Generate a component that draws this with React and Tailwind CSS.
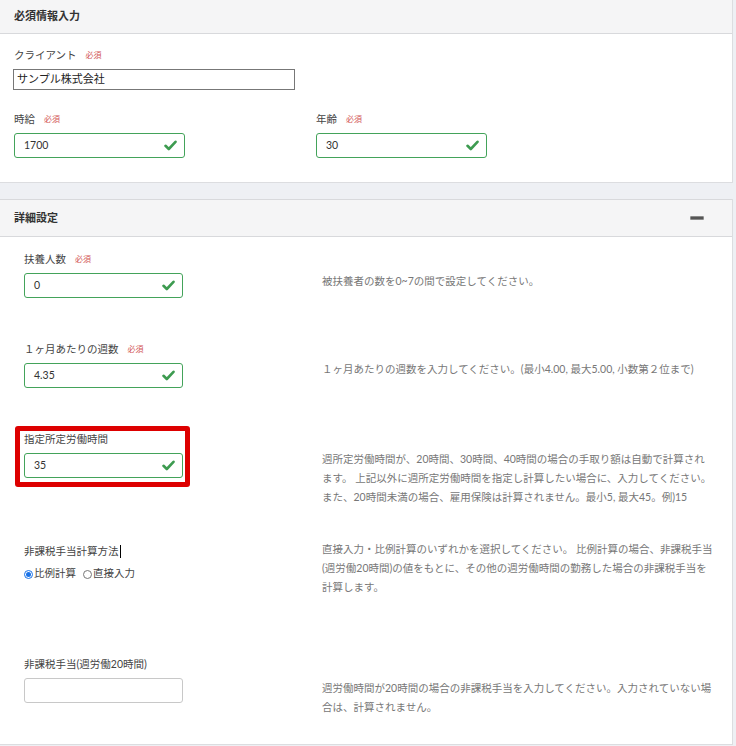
import React from 'react';

const font = { fontFamily: "Lato, 'Noto Sans CJK JP', sans-serif" };

const CheckMark = () => (
  <svg width="13" height="11" viewBox="0 0 13 11" className="shrink-0">
    <polyline points="1.5,5.8 4.8,9 11.5,1.8" fill="none" stroke="#3d9b50" strokeWidth="2.6" strokeLinecap="round" strokeLinejoin="round" />
  </svg>
);

const Required = () => (
  <span className="ml-[9px] text-[8px] text-[#d25555]">必須</span>
);

const Label = ({ children, required }) => (
  <div className="flex items-center h-[14px] text-[10.5px] leading-[14px] text-[#444]">
    <span>{children}</span>
    {required && <Required />}
  </div>
);

const ValidInput = ({ value, width = 'w-[159px]' }) => (
  <div className={`mt-[7px] flex items-center justify-between h-[25px] ${width} rounded-[3px] border border-[#43a35a] bg-white pl-[9px] pr-[7px]`}>
    <span className="text-[10.5px] text-[#333]">{value}</span>
    <CheckMark />
  </div>
);

// each row has a fixed height so the long descriptions don't push the next field down
const DetailRow = ({ rowClass, descClass, left, desc }) => (
  <div className={`flex items-start ${rowClass}`}>
    <div className="w-[322px] shrink-0 pl-6">{left}</div>
    <div className={`w-[400px] whitespace-nowrap text-[10.5px] leading-[19px] text-[#777] ${descClass}`}>{desc}</div>
  </div>
);

export default function App() {
  return (
    <div className="min-h-[746px] w-[736px] bg-[#eef0f4] text-[#333]" style={font}>
      <div className="w-[733px] border-r border-[#dcdde0] bg-white">
        {/* 必須情報入力 */}
        <div className="flex h-[34px] items-center border-b border-[#d8d9dc] bg-[#f5f5f6] pl-[14px]">
          <span className="text-[11px] font-bold text-[#333]">必須情報入力</span>
        </div>
        <div className="border-b border-[#dcdde0] pl-[14px] pt-[14px] pb-[24px]">
          <Label required>クライアント</Label>
          <div className="mt-[7px] -ml-px flex h-[21px] w-[282px] items-center border border-[#777] pl-[3px] text-[11px] text-[#222]">
            サンプル株式会社
          </div>
          <div className="mt-[22px] flex">
            <div className="w-[302px]">
              <Label required>時給</Label>
              <ValidInput value="1700" width="w-[171px]" />
            </div>
            <div>
              <Label required>年齢</Label>
              <ValidInput value="30" width="w-[171px]" />
            </div>
          </div>
        </div>
      </div>

      <div className="h-[16px]" />

      {/* 詳細設定 */}
      <div className="w-[733px] border-r border-[#dcdde0] bg-white">
        <div className="flex h-[38px] items-center justify-between border-y border-[#d8d9dc] bg-[#f5f5f6] pl-[14px] pr-[28px]">
          <span className="text-[11px] font-bold text-[#333]">詳細設定</span>
          <span className="block h-[4px] w-[14px] rounded-[1px] border border-[#8a8a8a] bg-[#555]" />
        </div>
        <div className="border-b border-[#dcdde0] pt-[15px]">
          <DetailRow
            rowClass="h-[90px]"
            descClass="pt-[20px]"
            left={
              <>
                <Label required>扶養人数</Label>
                <ValidInput value="0" />
              </>
            }
            desc="被扶養者の数を0~7の間で設定してください。"
          />
          <DetailRow
            rowClass="h-[90px]"
            descClass="pt-[18px]"
            left={
              <>
                <Label required>１ヶ月あたりの週数</Label>
                <ValidInput value="4.35" />
              </>
            }
            desc="１ヶ月あたりの週数を入力してください。(最小4.00, 最大5.00, 小数第２位まで)"
          />
          <DetailRow
            rowClass="h-[112px]"
            descClass="pt-[18px] leading-[18.5px]"
            left={
              <div className="relative">
                <div className="pointer-events-none absolute -left-[9px] -top-[6px] h-[61px] w-[175px] rounded-[3px] border-[5px] border-[#dd0000]" />
                <Label>指定所定労働時間</Label>
                <ValidInput value="35" />
              </div>
            }
            desc={
              <>
                週所定労働時間が、20時間、30時間、40時間の場合の手取り額は自動で計算され
                <br />
                ます。 上記以外に週所定労働時間を指定し計算したい場合に、入力してください。
                <br />
                また、20時間未満の場合、雇用保険は計算されません。最小5, 最大45。例)15
              </>
            }
          />
          <DetailRow
            rowClass="h-[113px]"
            descClass="-mt-[4px] leading-[19.5px]"
            left={
              <>
                <div className="flex h-[14px] items-center text-[10.5px] leading-[14px] text-[#444]">
                  <span>非課税手当計算方法</span>
                  <span className="ml-px inline-block h-[13px] w-px bg-black" />
                </div>
                <div className="mt-[9px] flex h-[14px] items-center text-[10.5px] text-[#444]">
                  <span className="mr-px flex h-[9px] w-[9px] items-center justify-center rounded-full border border-[#1a73e8]">
                    <span className="h-[5px] w-[5px] rounded-full bg-[#1a73e8]" />
                  </span>
                  <span>比例計算</span>
                  <span className="ml-[7px] mr-px h-[9px] w-[9px] rounded-full border border-[#777]" />
                  <span>直接入力</span>
                </div>
              </>
            }
            desc={
              <>
                直接入力・比例計算のいずれかを選択してください。 比例計算の場合、非課税手当
                <br />
                (週労働20時間)の値をもとに、その他の週労働時間の勤務した場合の非課税手当を
                <br />
                計算します。
              </>
            }
          />
          <DetailRow
            rowClass="h-[87px]"
            descClass="pt-[22px] leading-[18px]"
            left={
              <>
                <Label>非課税手当(週労働20時間)</Label>
                <div className="mt-[7px] h-[25px] w-[159px] rounded-[3px] border border-[#c8c8c8] bg-white" />
              </>
            }
            desc={
              <>
                週労働時間が20時間の場合の非課税手当を入力してください。入力されていない場
                <br />
                合は、計算されません。
              </>
            }
          />
        </div>
      </div>
    </div>
  );
}
